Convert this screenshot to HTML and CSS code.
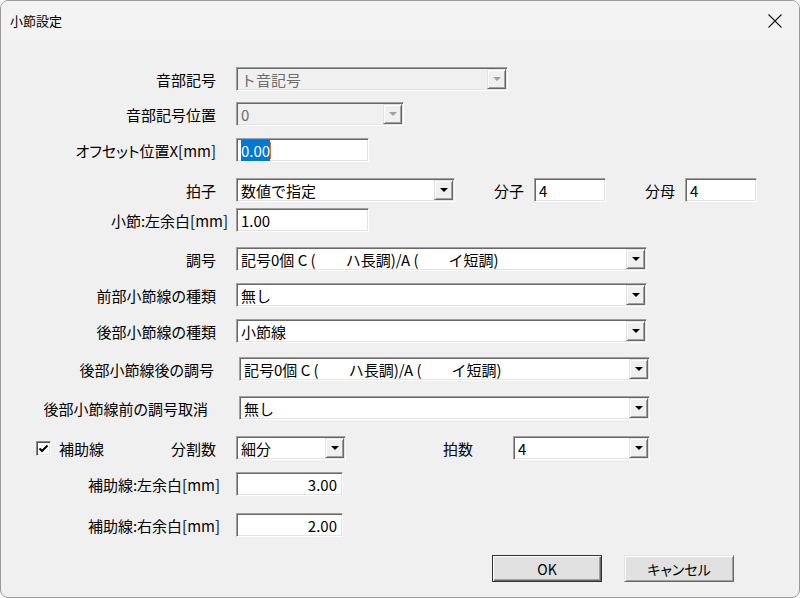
FILE: index.html
```html
<!DOCTYPE html>
<html lang="ja">

<head>
    <meta charset="UTF-8">
    <title>小節設定</title>
    <link rel="stylesheet" href="styles.css">
</head>

<body>
    <div class="window">
        <div class="titlebar">
            <span class="title">小節設定</span>
            <svg class="close" width="14" height="14" viewBox="0 0 14 14">
                <path d="M0.5 0.5L13.5 13.5M13.5 0.5L0.5 13.5" stroke="#1a1a1a" stroke-width="1.1" fill="none" />
            </svg>
        </div>

        <div class="content">
            <div class="form">
                <div class="row">
                    <span class="lbl">音部記号</span>
                    <div class="field combo disabled w-clef"><span class="val">ト音記号</span><span class="drop"></span></div>
                </div>

                <div class="row">
                    <span class="lbl">音部記号位置</span>
                    <div class="field combo disabled w-pos"><span class="val">0</span><span class="drop"></span></div>
                </div>

                <div class="row">
                    <span class="lbl">オフセット位置X[mm]</span>
                    <div class="field w-num"><span class="sel">0.00</span><span class="caret"></span></div>
                </div>

                <div class="row">
                    <span class="lbl">拍子</span>
                    <div class="field combo w-time"><span class="val">数値で指定</span><span class="drop"></span></div>
                    <span class="sub-lbl">分子</span>
                    <div class="field w-frac"><span class="val">4</span></div>
                    <span class="sub-lbl">分母</span>
                    <div class="field w-frac"><span class="val">4</span></div>
                </div>

                <div class="row">
                    <span class="lbl near">小節:左余白[mm]</span>
                    <div class="field w-num"><span class="val">1.00</span></div>
                </div>

                <div class="row">
                    <span class="lbl">調号</span>
                    <div class="field combo w-wide"><span class="val">記号0個 C (　　ハ長調)/A (　　イ短調)</span><span class="drop"></span></div>
                </div>

                <div class="row">
                    <span class="lbl">前部小節線の種類</span>
                    <div class="field combo w-wide"><span class="val">無し</span><span class="drop"></span></div>
                </div>

                <div class="row">
                    <span class="lbl">後部小節線の種類</span>
                    <div class="field combo w-wide"><span class="val">小節線</span><span class="drop"></span></div>
                </div>

                <div class="row shifted">
                    <span class="lbl">後部小節線後の調号</span>
                    <div class="field combo w-wide"><span class="val">記号0個 C (　　ハ長調)/A (　　イ短調)</span><span class="drop"></span></div>
                </div>

                <div class="row shifted">
                    <span class="lbl long">後部小節線前の調号取消</span>
                    <div class="field combo w-wide"><span class="val">無し</span><span class="drop"></span></div>
                </div>

                <div class="row">
                    <div class="lbl split">
                        <label class="checkbox">
                            <span class="check">
                                <svg width="11" height="11" viewBox="0 0 11 11">
                                    <path d="M1.5 5.5L4 8L9.5 2.5" stroke="#000" stroke-width="2" fill="none" />
                                </svg>
                            </span>
                            補助線
                        </label>
                        <span>分割数</span>
                    </div>
                    <div class="field combo w-div"><span class="val">細分</span><span class="drop"></span></div>
                    <span class="sub-lbl beats">拍数</span>
                    <div class="field combo w-beats"><span class="val">4</span><span class="drop"></span></div>
                </div>

                <div class="row">
                    <span class="lbl aux">補助線:左余白[mm]</span>
                    <div class="field right w-aux"><span class="val">3.00</span></div>
                </div>

                <div class="row">
                    <span class="lbl aux">補助線:右余白[mm]</span>
                    <div class="field right w-aux"><span class="val">2.00</span></div>
                </div>
            </div>

            <div class="buttons">
                <button class="btn default">OK</button>
                <button class="btn">キャンセル</button>
            </div>
        </div>
    </div>
</body>

</html>
```

FILE: styles.css
```css
html,
body {
    margin: 0;
    background-color: #fff;
}

body {
    font-family: "Noto Sans CJK JP", "Liberation Sans", sans-serif;
    color: #000;
}

.window {
    width: 800px;
    height: 598px;
    box-sizing: border-box;
    border: 1px solid #9a9a9a;
    border-radius: 8px;
    overflow: hidden;
    background-color: #f0f0f0;
}

.titlebar {
    height: 39px;
    display: flex;
    align-items: center;
    padding: 0 17px 0 9px;
    background-color: #f3f3f3;
}

.title {
    font-size: 13px;
}

.close {
    margin-left: auto;
}

.content {
    padding-top: 27px;
}

/* one track per dialog row, heights taken from the original spacing */
.form {
    display: grid;
    grid-template-rows: 35px 36px 40px 30px 39px 36px 36px 38px 39px 40px 36px 41px 42px;
}

.row {
    display: flex;
    align-items: center;
    height: 24px;
    font-size: 15px;
}

.lbl {
    width: 215px;
    margin-right: 20px;
    text-align: right;
    white-space: nowrap;
    font-feature-settings: "palt";
}

.lbl.near {
    width: 227px;
    margin-right: 8px;
}

.lbl.aux {
    width: 219px;
    margin-right: 16px;
}

.row.shifted .lbl {
    width: 213px;
    margin-right: 25px;
}

.row.shifted .lbl.long {
    width: 207px;
    margin-right: 31px;
}

.lbl.split {
    display: flex;
    justify-content: space-between;
    align-items: center;
    box-sizing: border-box;
    padding-left: 35px;
    text-align: left;
}

.checkbox {
    display: flex;
    align-items: center;
    gap: 8px;
}

.check {
    width: 15px;
    height: 15px;
    box-sizing: border-box;
    display: flex;
    align-items: center;
    justify-content: center;
    background-color: #fff;
    border-style: solid;
    border-width: 1px;
    border-color: #8a8a8a #fff #fff #8a8a8a;
    box-shadow: inset 1px 1px 0 #505050, inset -1px -1px 0 #e3e3e3;
}

.sub-lbl {
    margin: 0 10px 0 39px;
}

.sub-lbl.beats {
    margin: 0 40px 0 97px;
}

.field {
    height: 24px;
    box-sizing: border-box;
    display: flex;
    align-items: center;
    padding: 1px 1px 1px 4px;
    background-color: #fff;
    border-style: solid;
    border-width: 1px;
    border-color: #a0a0a0 #fff #fff #a0a0a0;
    box-shadow: inset 1px 1px 0 #696969, inset -1px -1px 0 #e3e3e3;
    white-space: nowrap;
    overflow: hidden;
}

.field.right {
    justify-content: flex-end;
    padding-right: 5px;
}

.field.disabled {
    background-color: #f0f0f0;
    color: #6d6d6d;
}

.drop {
    margin-left: auto;
    width: 19px;
    height: 20px;
    flex-shrink: 0;
    box-sizing: border-box;
    display: flex;
    align-items: center;
    justify-content: center;
    background-color: #f0f0f0;
    border-style: solid;
    border-width: 1px;
    border-color: #e3e3e3 #696969 #696969 #e3e3e3;
    box-shadow: inset 1px 1px 0 #fff, inset -1px -1px 0 #a0a0a0;
}

.drop::after {
    content: "";
    border-left: 4px solid transparent;
    border-right: 4px solid transparent;
    border-top: 4px solid #000;
}

.disabled .drop::after {
    border-top-color: #a0a0a0;
}

.sel {
    background-color: #0078d7;
    color: #fff;
}

.caret {
    width: 1px;
    height: 17px;
    background-color: #c87830;
}

.w-clef { width: 272px; }
.w-pos { width: 168px; }
.w-num { width: 133px; }
.w-time { width: 219px; }
.w-frac { width: 72px; }
.w-wide { width: 411px; }
.w-div { width: 110px; }
.w-beats { width: 137px; }
.w-aux { width: 107px; }

.buttons {
    display: flex;
    justify-content: flex-end;
    gap: 22px;
    padding-right: 65px;
}

.btn {
    width: 110px;
    height: 27px;
    box-sizing: border-box;
    font-family: inherit;
    font-size: 14px;
    font-feature-settings: "palt";
    padding: 0;
    background-color: #e1e1e1;
    border-style: solid;
    border-width: 1px;
    border-color: #e3e3e3 #696969 #696969 #e3e3e3;
    box-shadow: inset 1px 1px 0 #fff, inset -1px -1px 0 #a0a0a0;
}

.btn.default {
    border-color: #333;
    box-shadow: inset 1px 1px 0 #fff, inset -1px -1px 0 #696969, inset -2px -2px 0 #a0a0a0;
}
```
